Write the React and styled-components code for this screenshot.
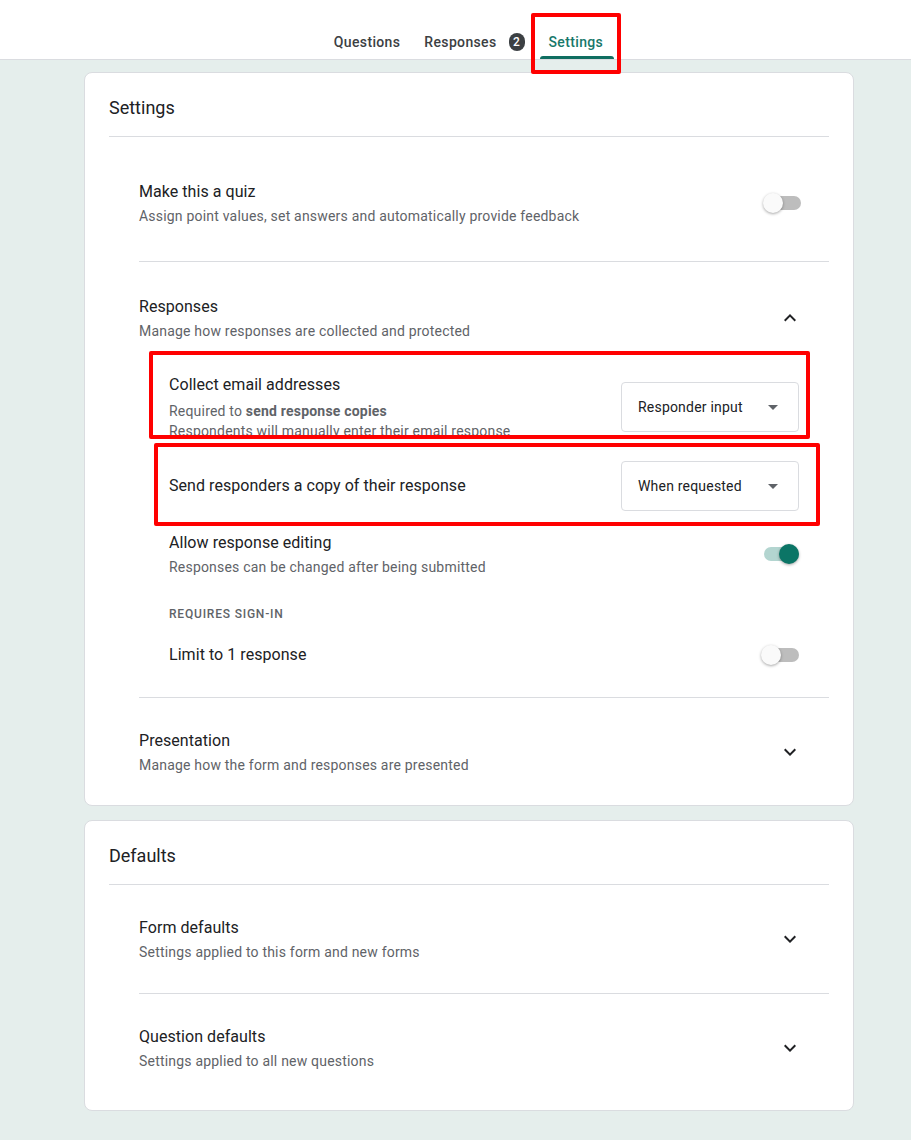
import React from "react";
import styled, { createGlobalStyle } from "styled-components";

const GlobalStyle = createGlobalStyle`
  body {
    margin: 0;
    font-family: Roboto, "Liberation Sans", Arial, sans-serif;
    color: #202124;
    background: #e5eeec;
  }
  * { box-sizing: border-box; }
`;

function ChevronIcon({ up }) {
  return (
    <svg width="24" height="24" viewBox="0 0 24 24" fill="#202124">
      {up ? (
        <path d="M12 8l-6 6 1.41 1.41L12 10.83l4.59 4.58L18 14z" />
      ) : (
        <path d="M16.59 8.59 12 13.17 7.41 8.59 6 10l6 6 6-6z" />
      )}
    </svg>
  );
}

function Toggle({ on }) {
  return (
    <Switch>
      <Track $on={on} />
      <Thumb $on={on} />
    </Switch>
  );
}

function Select({ value }) {
  return (
    <SelectBox>
      <span>{value}</span>
      <svg width="24" height="24" viewBox="0 0 24 24" fill="#5f6368">
        <path d="M7 10l5 5 5-5z" />
      </svg>
    </SelectBox>
  );
}

function Info({ title, children, gap }) {
  return (
    <InfoBlock>
      <Title>{title}</Title>
      {children && <Sub $gap={gap}>{children}</Sub>}
    </InfoBlock>
  );
}

function App() {
  return (
    <Page>
      <GlobalStyle />
      <Header>
        <Tab>Questions</Tab>
        <Tab>
          Responses <Badge>2</Badge>
        </Tab>
        <Tab $active>Settings</Tab>
      </Header>

      <Main>
        <Card>
          <CardTitle>Settings</CardTitle>
          <Sections>
            <Section $top={43} $bottom={35} $first>
              <Row>
                <Info title="Make this a quiz">
                  Assign point values, set answers and automatically provide feedback
                </Info>
                <Toggle />
              </Row>
            </Section>

            <Section $top={33} $bottom={30}>
              <Row>
                <Info title="Responses">
                  Manage how responses are collected and protected
                </Info>
                <ChevronIcon up />
              </Row>
              <SubList>
                <SubRow $mt={32}>
                  <Info title="Collect email addresses" gap={4}>
                    Required to <b>send response copies</b>
                    <br />
                    Respondents will manually enter their email response
                  </Info>
                  <Select value="Responder input" />
                </SubRow>
                <SubRow $mt={20}>
                  <Title>Send responders a copy of their response</Title>
                  <Select value="When requested" />
                </SubRow>
                <SubRow $mt={20}>
                  <Info title="Allow response editing">
                    Responses can be changed after being submitted
                  </Info>
                  <Toggle on />
                </SubRow>
                <Caption>Requires sign-in</Caption>
                <SubRow $mt={21}>
                  <Title>Limit to 1 response</Title>
                  <Toggle />
                </SubRow>
              </SubList>
            </Section>

            <Section $top={31} $bottom={30}>
              <Row>
                <Info title="Presentation">
                  Manage how the form and responses are presented
                </Info>
                <ChevronIcon />
              </Row>
            </Section>
          </Sections>
        </Card>

        <Card>
          <CardTitle>Defaults</CardTitle>
          <Sections>
            <Section $top={31} $bottom={31} $first>
              <Row>
                <Info title="Form defaults">
                  Settings applied to this form and new forms
                </Info>
                <ChevronIcon />
              </Row>
            </Section>
            <Section $top={31} $bottom={39}>
              <Row>
                <Info title="Question defaults">
                  Settings applied to all new questions
                </Info>
                <ChevronIcon />
              </Row>
            </Section>
          </Sections>
        </Card>
      </Main>

      <Marker $x={531} $y={13} $w={90} $h={61} />
      <Marker $x={149} $y={351} $w={661} $h={88} />
      <Marker $x={154} $y={443} $w={666} $h={83} />
    </Page>
  );
}

const Page = styled.div`
  position: relative;
  min-height: 1140px;
  background: #e5eeec;
`;

const Header = styled.div`
  height: 60px;
  background: #fff;
  border-bottom: 1px solid #dadce0;
  display: flex;
  justify-content: center;
  padding-left: 26px;
`;

const Tab = styled.div`
  position: relative;
  display: flex;
  align-items: center;
  gap: 12px;
  height: 100%;
  padding: 24px 12px 0;
  font-size: 14px;
  font-weight: 500;
  letter-spacing: 0.35px;
  color: ${(p) => (p.$active ? "#18786a" : "#3c4043")};

  &::after {
    content: "";
    display: ${(p) => (p.$active ? "block" : "none")};
    position: absolute;
    left: 3px;
    right: 1px;
    bottom: 0;
    height: 3px;
    border-radius: 3px 3px 0 0;
    background: #0f6e61;
  }
`;

const Badge = styled.span`
  display: inline-flex;
  align-items: center;
  justify-content: center;
  width: 16px;
  height: 18px;
  border-radius: 8px;
  background: #3c4043;
  color: #fff;
  font-size: 12px;
  font-weight: 500;
  letter-spacing: 0;
`;

const Main = styled.div`
  display: flex;
  flex-direction: column;
  gap: 14px;
  padding: 12px 57px 30px 84px;
`;

const Card = styled.div`
  background: #fff;
  border: 1px solid #dadce0;
  border-radius: 8px;
  padding: 0 24px;
`;

const CardTitle = styled.div`
  padding: 23px 0 16px;
  border-bottom: 1px solid #dadce0;
  font-size: 18px;
  line-height: 24px;
  color: #202124;
`;

const Sections = styled.div`
  margin-left: 30px;
`;

const Section = styled.div`
  border-top: ${(p) => (p.$first ? "none" : "1px solid #dadce0")};
  padding: ${(p) => p.$top}px 0 ${(p) => p.$bottom}px;
`;

const Row = styled.div`
  display: flex;
  align-items: center;
  justify-content: space-between;
  padding-right: 28px;

  svg {
    margin-right: -1px;
  }
`;

const SubList = styled.div`
  margin-left: 30px;
  padding-right: 30px;
`;

const SubRow = styled.div`
  display: flex;
  align-items: center;
  justify-content: space-between;
  margin-top: ${(p) => p.$mt}px;
`;

const InfoBlock = styled.div`
  display: flex;
  flex-direction: column;
`;

const Title = styled.div`
  font-size: 16px;
  line-height: 24px;
  letter-spacing: 0.05px;
  color: #202124;
`;

const Sub = styled.div`
  margin-top: ${(p) => p.$gap || 2}px;
  font-size: 14px;
  line-height: 20px;
  letter-spacing: 0.2px;
  color: #5f6368;

  b {
    font-weight: 700;
    color: #5f6368;
  }
`;

const Caption = styled.div`
  margin-top: 29px;
  font-size: 12px;
  line-height: 16px;
  font-weight: 500;
  letter-spacing: 0.8px;
  text-transform: uppercase;
  color: #5f6368;
`;

const SelectBox = styled.div`
  width: 178px;
  height: 50px;
  border: 1px solid #dadce0;
  border-radius: 4px;
  display: flex;
  align-items: center;
  justify-content: space-between;
  padding: 0 13px 0 16px;
  font-size: 14px;
  letter-spacing: 0.2px;
  color: #202124;
`;

const Switch = styled.div`
  position: relative;
  width: 38px;
  height: 20px;
  flex-shrink: 0;
`;

const Track = styled.div`
  position: absolute;
  left: 3px;
  right: 0;
  top: 3px;
  height: 14px;
  border-radius: 7px;
  background: ${(p) => (p.$on ? "#b3d5d0" : "#bdbdbd")};
`;

const Thumb = styled.div`
  position: absolute;
  top: 0;
  left: ${(p) => (p.$on ? "18px" : "0")};
  width: 20px;
  height: 20px;
  border-radius: 50%;
  background: ${(p) => (p.$on ? "#0b7566" : "#fafafa")};
  box-shadow: 0 1px 3px rgba(0, 0, 0, 0.35);
`;

const Marker = styled.div`
  position: absolute;
  left: ${(p) => p.$x}px;
  top: ${(p) => p.$y}px;
  width: ${(p) => p.$w}px;
  height: ${(p) => p.$h}px;
  border: 4px solid #ff0000;
  border-radius: 2px;
  pointer-events: none;
`;

export default App;
